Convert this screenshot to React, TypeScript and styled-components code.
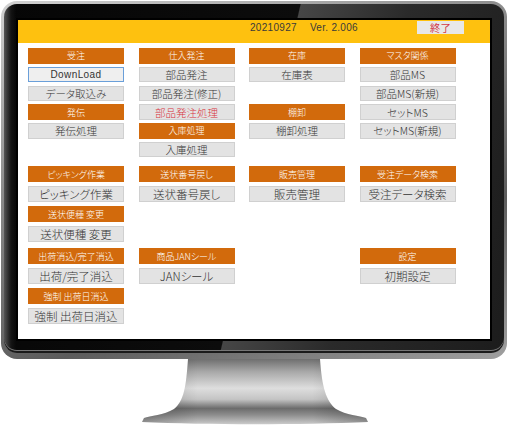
import React from "react"
import styled, { createGlobalStyle } from "styled-components"

const GlobalStyle = createGlobalStyle`
  html, body {
    margin: 0;
    padding: 0;
    background: #fff;
  }
  body {
    width: 508px;
    height: 431px;
    overflow: hidden;
    font-family: "Noto Sans CJK JP", "Liberation Sans", sans-serif;
  }
`

type Item =
  | { kind: "head"; label: string }
  | { kind: "btn"; label: string; red?: boolean; focus?: boolean }
  | { kind: "gap" }

type BandData = { h: number; gap: number; fs: number; mt: number; cols: Item[][] }

const H = (label: string): Item => ({ kind: "head", label })
const B = (label: string, opts: { red?: boolean; focus?: boolean } = {}): Item => ({
  kind: "btn",
  label,
  ...opts,
})
const G: Item = { kind: "gap" }

const bands: BandData[] = [
  {
    h: 15.5,
    gap: 3.3,
    fs: 10.5,
    mt: 0,
    cols: [
      [H("受注"), B("DownLoad", { focus: true }), B("データ取込み"), H("発伝"), B("発伝処理")],
      [
        H("仕入発注"),
        B("部品発注"),
        B("部品発注(修正)"),
        B("部品発注処理", { red: true }),
        H("入庫処理"),
        B("入庫処理"),
      ],
      [H("在庫"), B("在庫表"), G, H("棚卸"), B("棚卸処理")],
      [H("マスタ関係"), B("部品MS"), B("部品MS(新規)"), B("セットMS"), B("セットMS(新規)")],
    ],
  },
  {
    h: 16.5,
    gap: 3.5,
    fs: 11.5,
    mt: 8.5,
    cols: [
      [H("ピッキング作業"), B("ピッキング作業"), H("送状便種 変更"), B("送状便種 変更")],
      [H("送状番号戻し"), B("送状番号戻し")],
      [H("販売管理"), B("販売管理")],
      [H("受注データ検索"), B("受注データ検索")],
    ],
  },
  {
    h: 16.5,
    gap: 3.5,
    fs: 11.5,
    mt: 5.5,
    cols: [
      [H("出荷消込/完了消込"), B("出荷/完了消込"), H("強制 出荷日消込"), B("強制 出荷日消込")],
      [H("商品JANシール"), B("JANシール")],
      [],
      [H("設定"), B("初期設定")],
    ],
  },
]

const standPath =
  "M188 360 H320 C322 388 326 402 336 410 C346 416 360 417 366 419 L368 423 C300 426 208 426 142 423 L144 419 C150 417 164 416 174 410 C184 402 186 388 188 360 Z"

const App: React.FC = () => {
  return (
    <Page>
      <GlobalStyle />
      <Monitor>
        <Bezel>
          <Screen>
            <TopBar>
              <Stamp>20210927</Stamp>
              <Stamp>Ver. 2.006</Stamp>
              <ExitButton>終了</ExitButton>
            </TopBar>
            <Menu>
              {bands.map((band, bi) => (
                <Band key={bi} $h={band.h} $gap={band.gap} $fs={band.fs} $mt={band.mt}>
                  {band.cols.map((col, ci) => (
                    <Column key={ci}>
                      {col.map((item, ii) => {
                        if (item.kind === "head") return <SectionHead key={ii}>{item.label}</SectionHead>
                        if (item.kind === "gap") return <Spacer key={ii} />
                        return (
                          <MenuButton key={ii} $red={item.red} $focus={item.focus}>
                            {item.label}
                          </MenuButton>
                        )
                      })}
                    </Column>
                  ))}
                </Band>
              ))}
            </Menu>
          </Screen>
        </Bezel>
      </Monitor>
      <Stand width="508" height="71" viewBox="0 360 508 71">
        <defs>
          <linearGradient id="neck" x1="0" y1="360" x2="0" y2="425" gradientUnits="userSpaceOnUse">
            <stop offset="0" stopColor="#6f6f6f" />
            <stop offset="0.2" stopColor="#a9a9a9" />
            <stop offset="0.45" stopColor="#dedede" />
            <stop offset="0.62" stopColor="#c4c4c4" />
            <stop offset="0.76" stopColor="#6c6c6c" />
            <stop offset="0.86" stopColor="#8d8d8d" />
            <stop offset="1" stopColor="#c9c9c9" />
          </linearGradient>
          <linearGradient id="side" x1="140" y1="0" x2="370" y2="0" gradientUnits="userSpaceOnUse">
            <stop offset="0" stopColor="#000" stopOpacity="0.25" />
            <stop offset="0.25" stopColor="#000" stopOpacity="0" />
            <stop offset="0.75" stopColor="#000" stopOpacity="0" />
            <stop offset="1" stopColor="#000" stopOpacity="0.25" />
          </linearGradient>
        </defs>
        <path d={standPath} fill="url(#neck)" />
        <path d={standPath} fill="url(#side)" />
      </Stand>
    </Page>
  )
}

const Page = styled.div`
  width: 508px;
  padding-top: 1px;
`

const Monitor = styled.div`
  margin-left: 1px;
  width: 506px;
  box-sizing: border-box;
  padding: 3px 3px 6px 3px;
  border-radius: 16px;
  background: linear-gradient(160deg, #d2d2d2 0%, #8c8c8c 35%, #5c5c5c 70%, #a0a0a0 100%);
`

const Bezel = styled.div`
  border-radius: 13px;
  padding: 16px 14px 14px 14px;
  background:
    linear-gradient(90deg, rgba(150, 150, 150, 0.55) 0px, rgba(60, 60, 60, 0.25) 7px, rgba(0, 0, 0, 0) 12px),
    linear-gradient(
      103deg,
      #060606 0%,
      #0c0c0c 51%,
      #464646 51.2%,
      #2a2a2a 70%,
      #1c1c1c 100%
    );
  box-shadow: inset 0 -2px 0 #1a1a1a, inset 0 -3px 0 #777;
`

const Screen = styled.div`
  width: 472px;
  height: 319px;
  background: #fff;
  display: flex;
  flex-direction: column;
  box-shadow: 0 0 0 2px #000;
`

const TopBar = styled.div`
  height: 23px;
  flex-shrink: 0;
  background: #fec10f;
  display: flex;
  align-items: flex-start;
  padding-left: 232px;
  padding-top: 1px;
  box-sizing: border-box;
  gap: 13px;
`

const Stamp = styled.span`
  font-family: "Liberation Sans", sans-serif;
  font-size: 10px;
  letter-spacing: 0.3px;
  line-height: 13px;
  color: #3a3a3a;
`

const ExitButton = styled.button`
  margin-left: auto;
  margin-right: 26px;
  width: 47px;
  height: 13px;
  padding: 0;
  border: none;
  background: #e8e8e8;
  color: #d23a48;
  font-family: "Noto Sans CJK JP", sans-serif;
  font-size: 10.5px;
  line-height: 13px;
`

const Menu = styled.div`
  padding: 5px 0 0 10px;
  display: flex;
  flex-direction: column;
`

const Band = styled.div<{ $h: number; $gap: number; $fs: number; $mt: number }>`
  --h: ${p => p.$h}px;
  --gap: ${p => p.$gap}px;
  --fs: ${p => p.$fs}px;
  margin-top: ${p => p.$mt}px;
  display: grid;
  grid-template-columns: repeat(4, 96px);
  column-gap: 14.5px;
`

const Column = styled.div`
  display: flex;
  flex-direction: column;
  gap: var(--gap);
`

const SectionHead = styled.div`
  height: var(--h);
  background: #d26a0c;
  color: #fff;
  font-size: 9px;
  font-weight: 300;
  font-feature-settings: "palt";
  display: flex;
  align-items: center;
  justify-content: center;
  white-space: nowrap;
`

const Spacer = styled.div`
  height: var(--h);
`

const MenuButton = styled.div<{ $red?: boolean; $focus?: boolean }>`
  height: var(--h);
  box-sizing: border-box;
  background: ${p => (p.$focus ? "#efefef" : "#e3e3e3")};
  border: 1px solid ${p => (p.$focus ? "#6a9fd9" : "#d0d0d0")};
  color: ${p => (p.$red ? "#d8303c" : "#333")};
  font-family: ${p => (p.$focus ? `"Liberation Sans", sans-serif` : `"Noto Sans CJK JP", sans-serif`)};
  font-size: ${p => (p.$focus ? "10px" : "var(--fs)")};
  font-weight: ${p => (p.$focus ? 400 : 300)};
  letter-spacing: ${p => (p.$focus ? "0.4px" : "0")};
  font-feature-settings: "palt";
  display: flex;
  align-items: center;
  justify-content: center;
  white-space: nowrap;
`

const Stand = styled.svg`
  display: block;
`

export default App
